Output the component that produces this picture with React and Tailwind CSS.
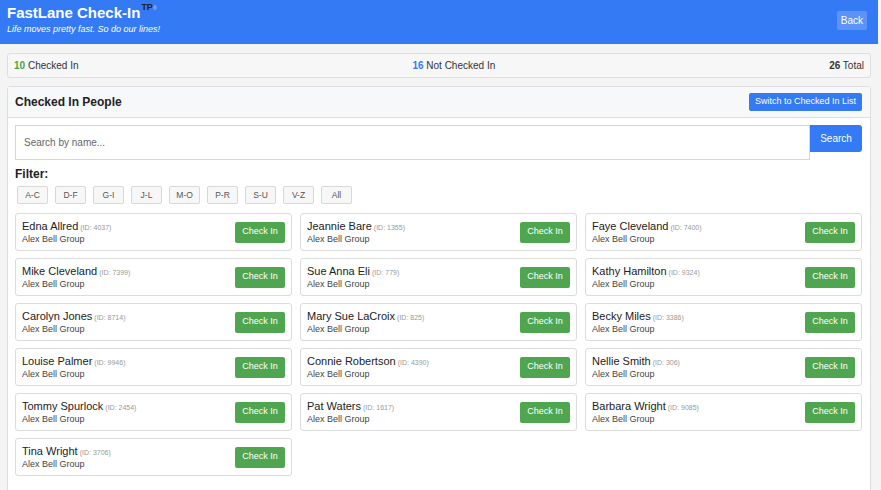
import React, { useState } from "react";

const people = [
  { name: "Edna Allred", id: 4037 },
  { name: "Jeannie Bare", id: 1355 },
  { name: "Faye Cleveland", id: 7400 },
  { name: "Mike Cleveland", id: 7399 },
  { name: "Sue Anna Eli", id: 779 },
  { name: "Kathy Hamilton", id: 9324 },
  { name: "Carolyn Jones", id: 8714 },
  { name: "Mary Sue LaCroix", id: 825 },
  { name: "Becky Miles", id: 3386 },
  { name: "Louise Palmer", id: 9946 },
  { name: "Connie Robertson", id: 4390 },
  { name: "Nellie Smith", id: 306 },
  { name: "Tommy Spurlock", id: 2454 },
  { name: "Pat Waters", id: 1617 },
  { name: "Barbara Wright", id: 9085 },
  { name: "Tina Wright", id: 3706 },
];

const filters = ["A-C", "D-F", "G-I", "J-L", "M-O", "P-R", "S-U", "V-Z", "All"];

const PersonCard = ({ person }) => (
  <div className="flex items-center justify-between h-[38px] pl-[6px] pr-[6px] bg-white border border-[#dcdcdc] rounded-[3px]">
    <div className="flex flex-col leading-none">
      <div className="flex items-baseline">
        <span className="text-[11px] text-[#222]">{person.name}</span>
        <span className="ml-[2px] text-[7px] text-[#999]">(ID: {person.id})</span>
      </div>
      <span className="mt-[3px] text-[9px] text-[#444]">Alex Bell Group</span>
    </div>
    <button className="w-[50px] h-[21px] bg-[#50a650] text-white text-[9px] rounded-[2px]">
      Check In
    </button>
  </div>
);

export default function App() {
  const [query, setQuery] = useState("");
  const [active, setActive] = useState("All");

  return (
    <div className="min-h-screen bg-[#f4f4f4] font-['Liberation_Sans',Arial,sans-serif] pr-[3px]">
      <header className="h-[44px] bg-[#347af5] flex items-start justify-between pl-[7px] pr-[11px]">
        <div className="pt-[5px]">
          <div className="flex items-start leading-none">
            <h1 className="text-[15px] font-bold text-white">FastLane Check-In</h1>
            <span className="text-[9px] font-bold text-[#222] -mt-[2px] ml-[1px]">TP</span>
            <span className="text-[5px] text-[#cfe0ff] mt-[1px]">®</span>
          </div>
          <p className="mt-[5px] text-[9px] italic text-white leading-none">
            Life moves pretty fast. So do our lines!
          </p>
        </div>
        <button className="mt-[11px] h-[19px] px-[4px] bg-[#5c93f7] rounded-[2px] text-white text-[10px]">
          Back
        </button>
      </header>

      <div className="px-[7px] pt-[9px]">
        <div className="h-[25px] flex items-center justify-between px-[6px] bg-[#f7f7f8] border border-[#dedede] rounded-[3px] text-[10px] text-[#333]">
          <span>
            <b className="text-[#46a546]">10</b> Checked In
          </span>
          <span>
            <b className="text-[#347af5]">16</b> Not Checked In
          </span>
          <span>
            <b>26</b> Total
          </span>
        </div>

        <div className="mt-[8px] bg-white border border-[#dedede] rounded-[3px] pb-[20px]">
          <div className="h-[31px] flex items-center justify-between pl-[7px] pr-[8px] bg-[#f7f8f9] border-b border-[#dedede]">
            <h2 className="text-[12px] font-bold text-[#222]">Checked In People</h2>
            <button className="h-[18px] px-[6px] bg-[#347af5] text-white text-[9px] rounded-[2px]">
              Switch to Checked In List
            </button>
          </div>

          <div className="pl-[7px] pr-[8px] pt-[7px]">
            <div className="flex items-start">
              <input
                value={query}
                onChange={(e) => setQuery(e.target.value)}
                placeholder="Search by name..."
                className="flex-1 h-[35px] px-[8px] border border-[#d6d6d6] text-[10px] text-[#333] placeholder-[#666] outline-none"
              />
              <button className="w-[52px] h-[27px] bg-[#347af5] text-white text-[10px] rounded-r-[3px]">
                Search
              </button>
            </div>

            <div className="mt-[8px] text-[12px] font-bold text-[#222] leading-none">Filter:</div>
            <div className="mt-[6px] flex gap-[7px] pl-[2px]">
              {filters.map((f) => (
                <button
                  key={f}
                  onClick={() => setActive(f)}
                  className="h-[18px] w-[31px] bg-[#f7f7f7] border border-[#d8d8d8] rounded-[2px] text-[8.5px] text-[#555]"
                >
                  {f}
                </button>
              ))}
            </div>

            <div className="mt-[9px] grid grid-cols-3 gap-x-[8px] gap-y-[7px]">
              {people.map((p) => (
                <PersonCard key={p.id} person={p} />
              ))}
            </div>
          </div>
        </div>
      </div>
    </div>
  );
}
